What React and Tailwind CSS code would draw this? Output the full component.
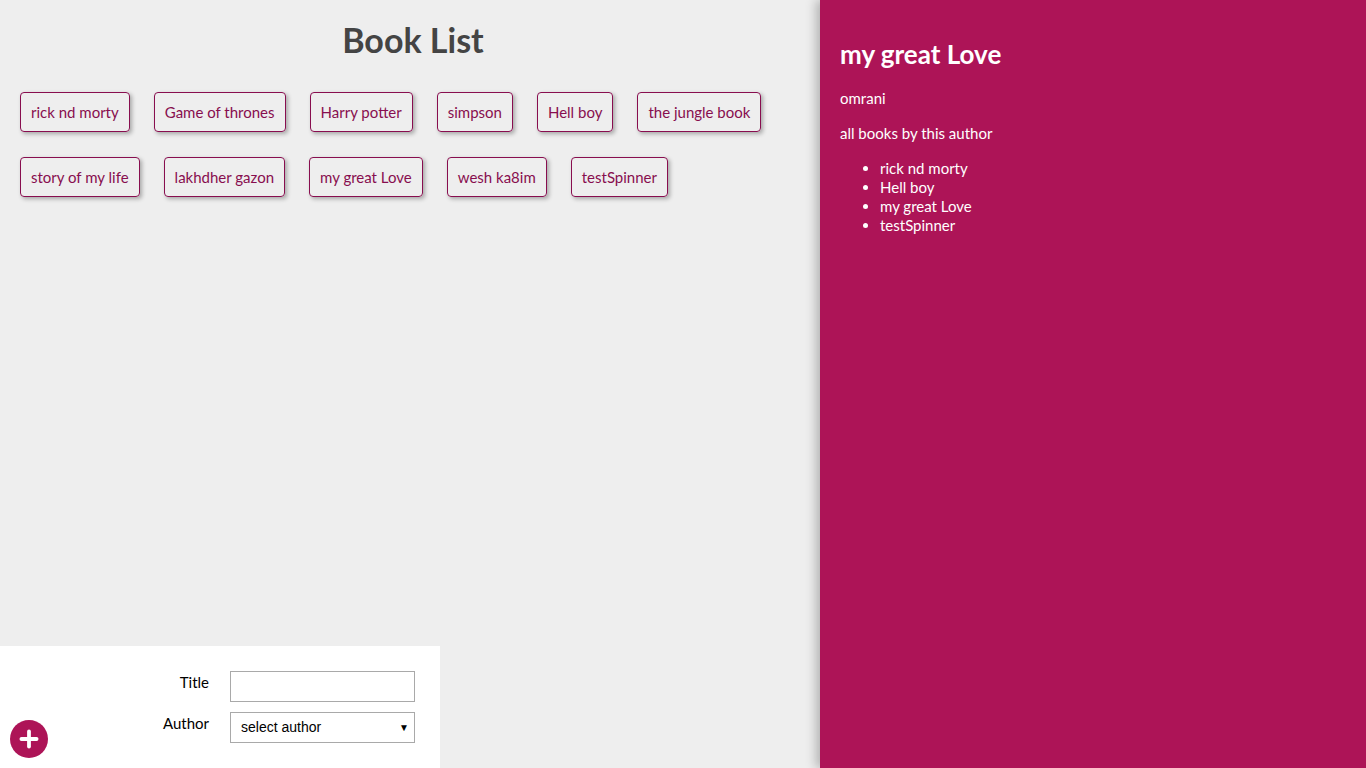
import React from 'react';
import { Plus } from 'lucide-react';

const books = [
  'rick nd morty',
  'Game of thrones',
  'Harry potter',
  'simpson',
  'Hell boy',
  'the jungle book',
  'story of my life',
  'lakhdher gazon',
  'my great Love',
  'wesh ka8im',
  'testSpinner',
];

const authorBooks = ['rick nd morty', 'Hell boy', 'my great Love', 'testSpinner'];

const App = () => {
  return (
    <div className="flex h-screen w-full overflow-hidden font-['Lato','Open_Sans',sans-serif]">
      {/* Book list */}
      <div className="flex flex-col w-[820px] bg-[#eeeeee]">
        <h1 className="text-center text-[34px] font-bold text-[#444444] pt-[17px] pl-[6px] leading-[46px]">
          Book List
        </h1>
        <ul className="flex flex-wrap px-[8px] pt-[17px] gap-y-[1px]">
          {books.map((b) => (
            <li
              key={b}
              className="m-[12px] px-[10px] h-[40px] flex items-center border border-[#880e4f] rounded-[4px] text-[15px] text-[#880e4f] shadow-[2px_2px_4px_rgba(0,0,0,0.3)] cursor-pointer"
            >
              {b}
            </li>
          ))}
        </ul>
        <div className="flex-1" />
        {/* Add book form */}
        <form className="flex w-[440px] h-[122px] bg-white">
          <button
            type="button"
            className="self-end mb-[10px] ml-[10px] w-[38px] h-[38px] rounded-full bg-[#ad1457] text-white flex items-center justify-center"
          >
            <Plus size={26} strokeWidth={3.5} />
          </button>
          <div className="self-center grid grid-cols-[161px_185px] gap-x-[21px] gap-y-[10px] items-start">
            <label className="text-right text-[15px] text-black leading-[22px]">Title</label>
            <input
              type="text"
              className="h-[31px] border border-[#a9a9a9] bg-white px-[6px] text-[14px]"
            />
            <label className="text-right text-[15px] text-black leading-[22px]">Author</label>
            <div className="relative">
              <select
                className="appearance-none w-[185px] h-[31px] border border-[#a9a9a9] bg-white pl-[10px] text-[14px] text-black font-['Liberation_Sans',Arial,sans-serif]"
                defaultValue=""
              >
                <option value="">select author</option>
              </select>
              <span className="pointer-events-none absolute right-[6px] top-[8px] text-[10px] text-black">▼</span>
            </div>
          </div>
        </form>
      </div>

      {/* Book details */}
      <div className="flex-1 bg-[#ad1457] text-white p-[20px] shadow-[-4px_0_10px_rgba(0,0,0,0.25)] z-10">
        <h2 className="text-[26px] font-bold leading-[32px] mt-[18px]">my great Love</h2>
        <p className="text-[15px] mt-[18px] leading-[20px]">omrani</p>
        <p className="text-[15px] mt-[15px] leading-[20px]">all books by this author</p>
        <ul className="list-disc pl-[40px] mt-[16px] text-[15px] leading-[19px]">
          {authorBooks.map((b) => (
            <li key={b}>{b}</li>
          ))}
        </ul>
      </div>
    </div>
  );
};

export default App;
